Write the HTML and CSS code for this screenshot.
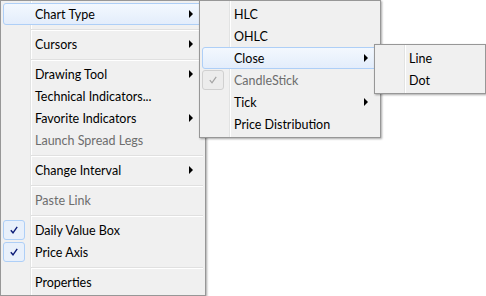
FILE: index.html
```html
<!DOCTYPE html>
<html lang="en">
<head>
    <meta charset="UTF-8">
    <meta name="viewport" content="width=device-width, initial-scale=1.0">
    <title>Chart Context Menu</title>
    <link rel="stylesheet" href="styles.css">
</head>
<body>
    <div class="menu main-menu">
        <div class="item hot"><span class="icon"></span><span class="label">Chart Type</span><span class="arrow"></span></div>
        <div class="sep"></div>
        <div class="item"><span class="icon"></span><span class="label">Cursors</span><span class="arrow"></span></div>
        <div class="sep"></div>
        <div class="item"><span class="icon"></span><span class="label">Drawing Tool</span><span class="arrow"></span></div>
        <div class="item"><span class="icon"></span><span class="label">Technical Indicators...</span></div>
        <div class="item"><span class="icon"></span><span class="label">Favorite Indicators</span><span class="arrow"></span></div>
        <div class="item disabled"><span class="icon"></span><span class="label">Launch Spread Legs</span></div>
        <div class="sep"></div>
        <div class="item"><span class="icon"></span><span class="label">Change Interval</span><span class="arrow"></span></div>
        <div class="sep"></div>
        <div class="item disabled"><span class="icon"></span><span class="label">Paste Link</span></div>
        <div class="sep"></div>
        <div class="item">
            <span class="icon checked"><svg width="8" height="8" viewBox="0 0 8 8"><path d="M0.8 4.2 L3 6.8 L7.2 0.8" fill="none" stroke="currentColor" stroke-width="1.4"/></svg></span>
            <span class="label">Daily Value Box</span>
        </div>
        <div class="item">
            <span class="icon checked"><svg width="8" height="8" viewBox="0 0 8 8"><path d="M0.8 4.2 L3 6.8 L7.2 0.8" fill="none" stroke="currentColor" stroke-width="1.4"/></svg></span>
            <span class="label">Price Axis</span>
        </div>
        <div class="sep"></div>
        <div class="item"><span class="icon"></span><span class="label">Properties</span></div>
    </div>

    <div class="menu chart-type-menu">
        <div class="item"><span class="icon"></span><span class="label">HLC</span></div>
        <div class="item"><span class="icon"></span><span class="label">OHLC</span></div>
        <div class="item hot"><span class="icon"></span><span class="label">Close</span><span class="arrow"></span></div>
        <div class="item disabled">
            <span class="icon checked"><svg width="8" height="8" viewBox="0 0 8 8"><path d="M0.8 4.2 L3 6.8 L7.2 0.8" fill="none" stroke="currentColor" stroke-width="1.2"/></svg></span>
            <span class="label">CandleStick</span>
        </div>
        <div class="item"><span class="icon"></span><span class="label">Tick</span><span class="arrow"></span></div>
        <div class="item"><span class="icon"></span><span class="label">Price Distribution</span></div>
    </div>

    <div class="menu close-menu">
        <div class="item"><span class="icon"></span><span class="label">Line</span></div>
        <div class="item"><span class="icon"></span><span class="label">Dot</span></div>
    </div>
</body>
</html>
```

FILE: styles.css
```css
body {
    margin: 0;
    background: #ffffff;
    font-family: Lato, "Noto Sans", sans-serif;
    font-size: 12.5px;
    color: #000000;
}
.menu {
    position: absolute;
    box-sizing: border-box;
    padding: 2px;
    border: 1px solid #979797;
    background-color: #f0f0f0;
    background-image: linear-gradient(to right, transparent 29px, #e2e3e3 29px, #e2e3e3 30px, #ffffff 30px, #ffffff 31px, transparent 31px);
    box-shadow: 1px 1px 2px rgba(0, 0, 0, 0.35);
}
.main-menu {
    left: 0;
    top: 0;
    width: 206px;
}
.chart-type-menu {
    left: 199px;
    top: 0;
    width: 182px;
}
.close-menu {
    left: 374px;
    top: 44px;
    width: 112px;
}
.item {
    display: flex;
    align-items: center;
    box-sizing: border-box;
    height: 22px;
    border: 1px solid transparent;
    border-radius: 3px;
}
.item.hot {
    border-color: #aecff7;
    background: linear-gradient(#f3f8fe, #e3edfb);
}
.icon {
    box-sizing: border-box;
    display: flex;
    align-items: center;
    justify-content: center;
    flex: none;
    width: 22px;
    height: 20px;
    margin-left: -1px;
    margin-right: 10px;
    border-radius: 3px;
}
.icon.checked {
    border: 1px solid #aecff7;
    background: #e8f0fb;
    color: #0c1c78;
}
.disabled .icon.checked {
    border-color: #d0d0d0;
    background: #ececec;
    color: #a3a3a3;
}
.label {
    flex: 1;
    white-space: nowrap;
}
.disabled .label {
    color: #6d6d6d;
}
.arrow {
    flex: none;
    width: 0;
    height: 0;
    margin-right: 9px;
    border-top: 4px solid transparent;
    border-bottom: 4px solid transparent;
    border-left: 4px solid #000000;
}
.sep {
    height: 8px;
    margin-left: 28px;
    background: linear-gradient(transparent 4px, #e0e0e0 4px, #e0e0e0 5px, #ffffff 5px, #ffffff 6px, transparent 6px);
}
```
